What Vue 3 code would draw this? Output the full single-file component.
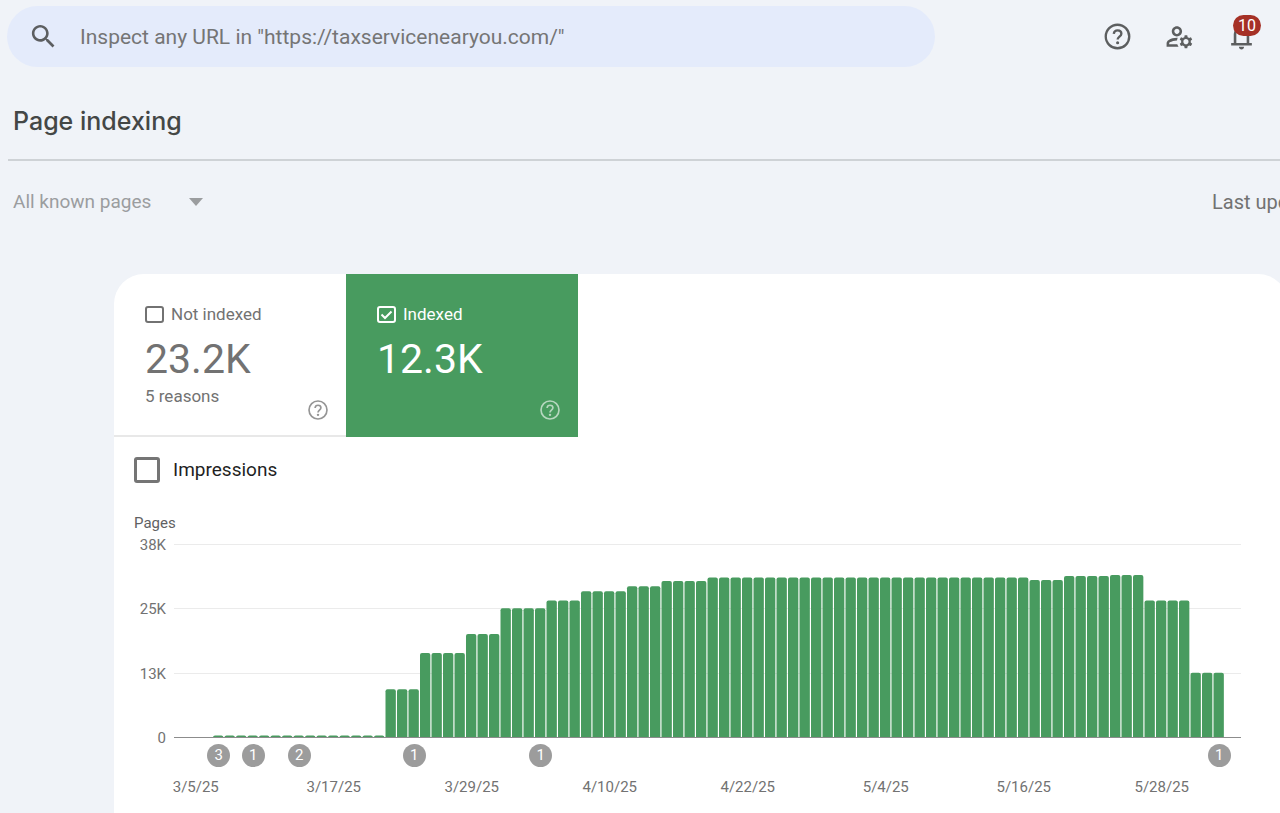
<script setup>
import { ref } from 'vue'

const scope = ref('all')
const notIndexed = ref(false)
const indexed = ref(true)
const impressions = ref(false)

const DAYS = 90
const AXIS_MAX = 37.5

// Runs of consecutive days sharing the same indexed page count, in thousands.
const runs = [
  [2, 0], [15, 0.3], [3, 9.3], [4, 16.3], [3, 20], [4, 25], [3, 26.5], [4, 28.3],
  [3, 29.3], [4, 30.3], [28, 31], [3, 30.5], [4, 31.3], [3, 31.5], [4, 26.5], [3, 12.5],
]
const slot = 100 / DAYS
const bars = runs
  .flatMap(([count, value]) => Array(count).fill(value))
  .map((value, day) => ({
    day,
    value,
    x: `${day * slot}%`,
    y: `${(1 - value / AXIS_MAX) * 100}%`,
    width: `${slot * 0.9}%`,
    height: `${(value / AXIS_MAX) * 100 + 3}%`,
  }))
  .filter((bar) => bar.value > 0)

const ticks = ['38K', '25K', '13K', '0']
const markers = [
  { day: 2, count: 3 }, { day: 5, count: 1 }, { day: 9, count: 2 },
  { day: 19, count: 1 }, { day: 30, count: 1 }, { day: 89, count: 1 },
]
const dates = ['3/5/25', '3/17/25', '3/29/25', '4/10/25', '4/22/25', '5/4/25', '5/16/25', '5/28/25']
  .map((label, i) => ({ label, day: i * 12 }))
</script>

<template>
  <div class="page">
    <header class="topbar">
      <label class="search">
        <svg class="icon" viewBox="0 0 24 24" aria-hidden="true">
          <path d="M15.5 14h-.79l-.28-.27C15.41 12.59 16 11.11 16 9.5 16 5.91 13.09 3 9.5 3S3 5.91 3 9.5 5.91 16 9.5 16c1.61 0 3.09-.59 4.23-1.57l.27.28v.79l5 4.99L20.49 19l-4.99-5zm-6 0C7.01 14 5 11.99 5 9.5S7.01 5 9.5 5 14 7.01 14 9.5 11.99 14 9.5 14z" />
        </svg>
        <input type="text" placeholder="Inspect any URL in &quot;https://taxservicenearyou.com/&quot;" />
      </label>
      <nav class="actions">
        <button type="button" class="icon-button" aria-label="Help">
          <svg class="icon" viewBox="0 0 24 24" aria-hidden="true">
            <circle class="ring" cx="12" cy="12" r="9.1" />
            <path class="ring" d="M9.1 9.9C9.3 8.2 10.5 7.2 12.1 7.2c1.7 0 2.9 1.1 2.9 2.6 0 2.2-2.9 2.5-2.9 4.6" />
            <circle cx="12.1" cy="16.8" r="1.2" />
          </svg>
        </button>
        <button type="button" class="icon-button" aria-label="User settings">
          <svg class="icon" viewBox="0 0 24 24" aria-hidden="true">
            <path d="M4 18v-.65c0-.34.16-.66.41-.81C6.1 15.53 8.03 15 10 15c.03 0 .05 0 .08.01.1-.7.3-1.37.59-1.98C10.45 13.01 10.23 13 10 13c-2.42 0-4.68.67-6.61 1.82C2.51 15.34 2 16.32 2 17.35V20h9.26c-.42-.6-.75-1.28-.97-2H4z" />
            <path d="M10 12c2.21 0 4-1.79 4-4s-1.79-4-4-4C7.79 4 6 5.79 6 8s1.79 4 4 4zm0-6c1.1 0 2 .9 2 2s-.9 2-2 2-2-.9-2-2 .9-2 2-2z" />
            <path d="M20.75 16c0-.22-.03-.42-.06-.63l1.14-1.01-1-1.73-1.45.49c-.32-.27-.68-.48-1.08-.63L18 11h-2l-.3 1.49c-.4.15-.76.36-1.08.63l-1.45-.49-1 1.73 1.14 1.01c-.03.21-.06.41-.06.63s.03.42.06.63l-1.14 1.01 1 1.73 1.45-.49c.32.27.68.48 1.08.63L16 21h2l.3-1.49c.4-.15.76-.36 1.08-.63l1.45.49 1-1.73-1.14-1.01c.03-.21.06-.41.06-.63zM17 18c-1.1 0-2-.9-2-2s.9-2 2-2 2 .9 2 2-.9 2-2 2z" />
          </svg>
        </button>
        <button type="button" class="icon-button" aria-label="Notifications">
          <svg class="icon" viewBox="0 0 24 24" aria-hidden="true">
            <path d="M4 19v-2h2v-7q0-2.075 1.25-3.687T10.5 4.2v-.7q0-.625.438-1.062T12 2t1.063.438T13.5 3.5v.7q2 .5 3.25 2.113T18 10v7h2v2zm8 3q-.825 0-1.412-.587T10 20h4q0 .825-.587 1.413T12 22m-4-5h8v-7q0-1.65-1.175-2.825T12 6T9.175 7.175T8 10z" />
          </svg>
          <span class="badge">10</span>
        </button>
      </nav>
    </header>

    <h1 class="title">Page indexing</h1>

    <div class="filters">
      <div class="scope">
        <select v-model="scope" aria-label="Pages shown">
          <option value="all">All known pages</option>
        </select>
        <svg class="arrow" viewBox="0 0 14 8" aria-hidden="true"><path d="M0 0h14L7 8z" /></svg>
      </div>
      <span class="updated">Last upd</span>
    </div>

    <main class="card">
      <div class="tiles">
        <section class="tile">
          <label class="tile-label">
            <input v-model="notIndexed" type="checkbox" class="check" />
            <span>Not indexed</span>
          </label>
          <strong class="total">23.2K</strong>
          <span class="reasons">5 reasons</span>
          <button type="button" class="tile-help" aria-label="About not indexed pages">
            <svg class="small-icon" viewBox="0 0 24 24" aria-hidden="true">
              <circle class="ring" cx="12" cy="12" r="9.8" />
              <path class="ring" d="M8.8 9.8C9 7.9 10.3 6.8 12 6.8c1.9 0 3.2 1.2 3.2 2.8 0 2.4-3.2 2.7-3.2 5" />
              <circle cx="12" cy="17.3" r="1.3" />
            </svg>
          </button>
        </section>
        <section class="tile selected">
          <label class="tile-label">
            <input v-model="indexed" type="checkbox" class="check" />
            <span>Indexed</span>
            <svg v-if="indexed" class="tick" viewBox="0 0 19 19" aria-hidden="true">
              <path d="M4.5 9.5l3.5 3.5 6.5-6.5" />
            </svg>
          </label>
          <strong class="total">12.3K</strong>
          <button type="button" class="tile-help" aria-label="About indexed pages">
            <svg class="small-icon" viewBox="0 0 24 24" aria-hidden="true">
              <circle class="ring" cx="12" cy="12" r="9.8" />
              <path class="ring" d="M8.8 9.8C9 7.9 10.3 6.8 12 6.8c1.9 0 3.2 1.2 3.2 2.8 0 2.4-3.2 2.7-3.2 5" />
              <circle cx="12" cy="17.3" r="1.3" />
            </svg>
          </button>
        </section>
      </div>

      <label class="impressions">
        <input v-model="impressions" type="checkbox" class="check large" />
        <span>Impressions</span>
      </label>

      <section class="chart">
        <div class="axis-title">Pages</div>
        <div class="ticks">
          <span v-for="tick in ticks" :key="tick">{{ tick }}</span>
        </div>
        <div class="plot">
          <div class="gridlines">
            <i v-for="tick in ticks" :key="tick"></i>
          </div>
          <svg class="bars" role="img" aria-label="Indexed pages by day">
            <rect
              v-for="bar in bars"
              :key="bar.day"
              :x="bar.x"
              :y="bar.y"
              :width="bar.width"
              :height="bar.height"
              rx="2"
            />
          </svg>
        </div>
        <div class="days markers">
          <span
            v-for="marker in markers"
            :key="marker.day"
            class="marker"
            :style="{ gridColumn: marker.day + 1 }"
          >{{ marker.count }}</span>
        </div>
        <div class="days dates">
          <span
            v-for="date in dates"
            :key="date.day"
            :style="{ gridColumn: date.day + 1 }"
          >{{ date.label }}</span>
        </div>
      </section>
    </main>
  </div>
</template>

<style>
body {
  margin: 0;
  background: #f0f3f8;
}
</style>

<style scoped>
.page {
  display: flex;
  flex-direction: column;
  min-height: 100vh;
  overflow: hidden;
  box-sizing: border-box;
  padding-top: 6px;
  background: #f0f3f8;
  color: #727272;
  font-family: Roboto, "Liberation Sans", sans-serif;
}

button {
  padding: 0;
  border: 0;
  background: none;
  color: inherit;
  font: inherit;
  cursor: pointer;
}

.icon,
.small-icon {
  display: block;
  flex: none;
  fill: currentColor;
}

.icon {
  width: 31px;
  height: 31px;
}

.small-icon {
  width: 22px;
  height: 22px;
}

.ring {
  fill: none;
  stroke: currentColor;
  stroke-width: 1.8;
}

.topbar {
  display: flex;
  align-items: center;
  padding: 0 23px 0 7px;
}

.search {
  display: flex;
  flex: 1;
  align-items: center;
  gap: 21px;
  height: 61px;
  box-sizing: border-box;
  padding: 0 21px;
  border-radius: 31px;
  background: #e4ebfb;
  color: #5c5e60;
}

.search input {
  flex: 1;
  min-width: 0;
  padding: 0;
  border: 0;
  outline: 0;
  background: none;
  color: #444746;
  font: 21px/28px Roboto, "Liberation Sans", sans-serif;
}

.search input::placeholder {
  color: #757575;
  opacity: 1;
}

.actions {
  display: flex;
  gap: 31px;
  margin-left: 167px;
  color: #5c5e5f;
}

.icon-button {
  position: relative;
}

.badge {
  position: absolute;
  top: -6px;
  left: 7px;
  min-width: 28px;
  box-sizing: border-box;
  border-radius: 11px;
  background: #a53026;
  color: #fff;
  font-size: 16px;
  line-height: 21px;
  text-align: center;
}

.title {
  margin: 0 0 0 8px;
  padding: 36px 0 20px 5px;
  border-bottom: 2px solid #ced2d6;
  color: #444746;
  font: 500 25px/36px Inter, Roboto, sans-serif;
}

.filters {
  display: flex;
  align-items: center;
  justify-content: space-between;
  height: 82px;
  padding-left: 13px;
  font-size: 20px;
  line-height: 28px;
}

.scope {
  display: grid;
  align-items: center;
  width: 190px;
  color: #9b9d9f;
  font-size: 19px;
}

.scope select {
  grid-area: 1 / 1;
  width: 100%;
  padding: 0;
  border: 0;
  appearance: none;
  background: none;
  color: inherit;
  font: inherit;
}

.arrow {
  grid-area: 1 / 1;
  justify-self: end;
  width: 14px;
  height: 8px;
  fill: currentColor;
  pointer-events: none;
}

.updated {
  flex: none;
  width: 68px;
  white-space: nowrap;
}

.card {
  flex: 1;
  margin: 31px -8px 0 114px;
  overflow: hidden;
  border-radius: 30px 30px 0 0;
  background: #fff;
}

.tiles {
  display: flex;
}

.tile {
  position: relative;
  display: flex;
  flex-direction: column;
  align-items: flex-start;
  width: 232px;
  height: 163px;
  box-sizing: border-box;
  padding: 28px 17px 0 31px;
  border-bottom: 2px solid #e8e8e8;
}

.tile.selected {
  border-color: #489b5f;
  background: #489b5f;
  color: #fff;
}

.tile-label {
  position: relative;
  display: flex;
  align-items: center;
  gap: 7px;
  font-size: 17px;
  line-height: 24px;
}

.check {
  width: 19px;
  height: 17px;
  box-sizing: border-box;
  margin: 0;
  border: 2px solid;
  border-radius: 3px;
  appearance: none;
  color: inherit;
}

.tick {
  position: absolute;
  top: 3px;
  left: 0;
  width: 19px;
  height: 19px;
  fill: none;
  stroke: currentColor;
  stroke-width: 2;
  pointer-events: none;
}

.total {
  margin-top: 9px;
  font-size: 41px;
  font-weight: 400;
  line-height: 48px;
}

.reasons {
  font-size: 17px;
  line-height: 26px;
}

.tile-help {
  position: absolute;
  right: 17px;
  bottom: 14px;
  opacity: 0.75;
}

.tile.selected .tile-help {
  opacity: 0.6;
}

.impressions {
  display: flex;
  align-items: center;
  gap: 13px;
  width: fit-content;
  margin: 19px 0 0 20px;
  color: #1f1f1f;
  font-size: 19px;
  line-height: 28px;
}

.check.large {
  width: 26px;
  height: 26px;
  border-width: 3px;
  border-color: #757575;
}

.chart {
  display: grid;
  grid-template-columns: 32px minmax(0, 1fr);
  column-gap: 8px;
  margin: 29px 47px 0 20px;
  font-size: 15px;
  line-height: 20px;
}

.axis-title {
  grid-column: 1 / -1;
  margin-bottom: 2px;
  color: #5f6163;
}

.ticks {
  display: flex;
  flex-direction: column;
  justify-content: space-between;
  align-items: flex-end;
}

.plot {
  display: grid;
  height: 194px;
  margin: 9px 0 10px;
}

.gridlines {
  display: flex;
  grid-area: 1 / 1;
  flex-direction: column;
  justify-content: space-between;
}

.gridlines i {
  height: 1px;
  background: #ebebeb;
}

.gridlines i:last-child {
  z-index: 1;
  background: #8c8c8c;
}

.bars {
  grid-area: 1 / 1;
  width: calc(100% - 32px);
  height: 193px;
  margin: 0 16px;
  overflow: hidden;
  fill: #489b5f;
}

.days {
  display: grid;
  grid-column: 2;
  grid-template-columns: repeat(90, minmax(0, 1fr));
  padding: 0 16px;
}

.days span {
  grid-row: 1;
  justify-self: center;
  white-space: nowrap;
}

.markers {
  margin-top: -4px;
}

.marker {
  width: 23px;
  border-radius: 50%;
  background: #9c9c9c;
  color: #fff;
  line-height: 23px;
  text-align: center;
}

.dates {
  margin: 10px 0 16px;
}
</style>
